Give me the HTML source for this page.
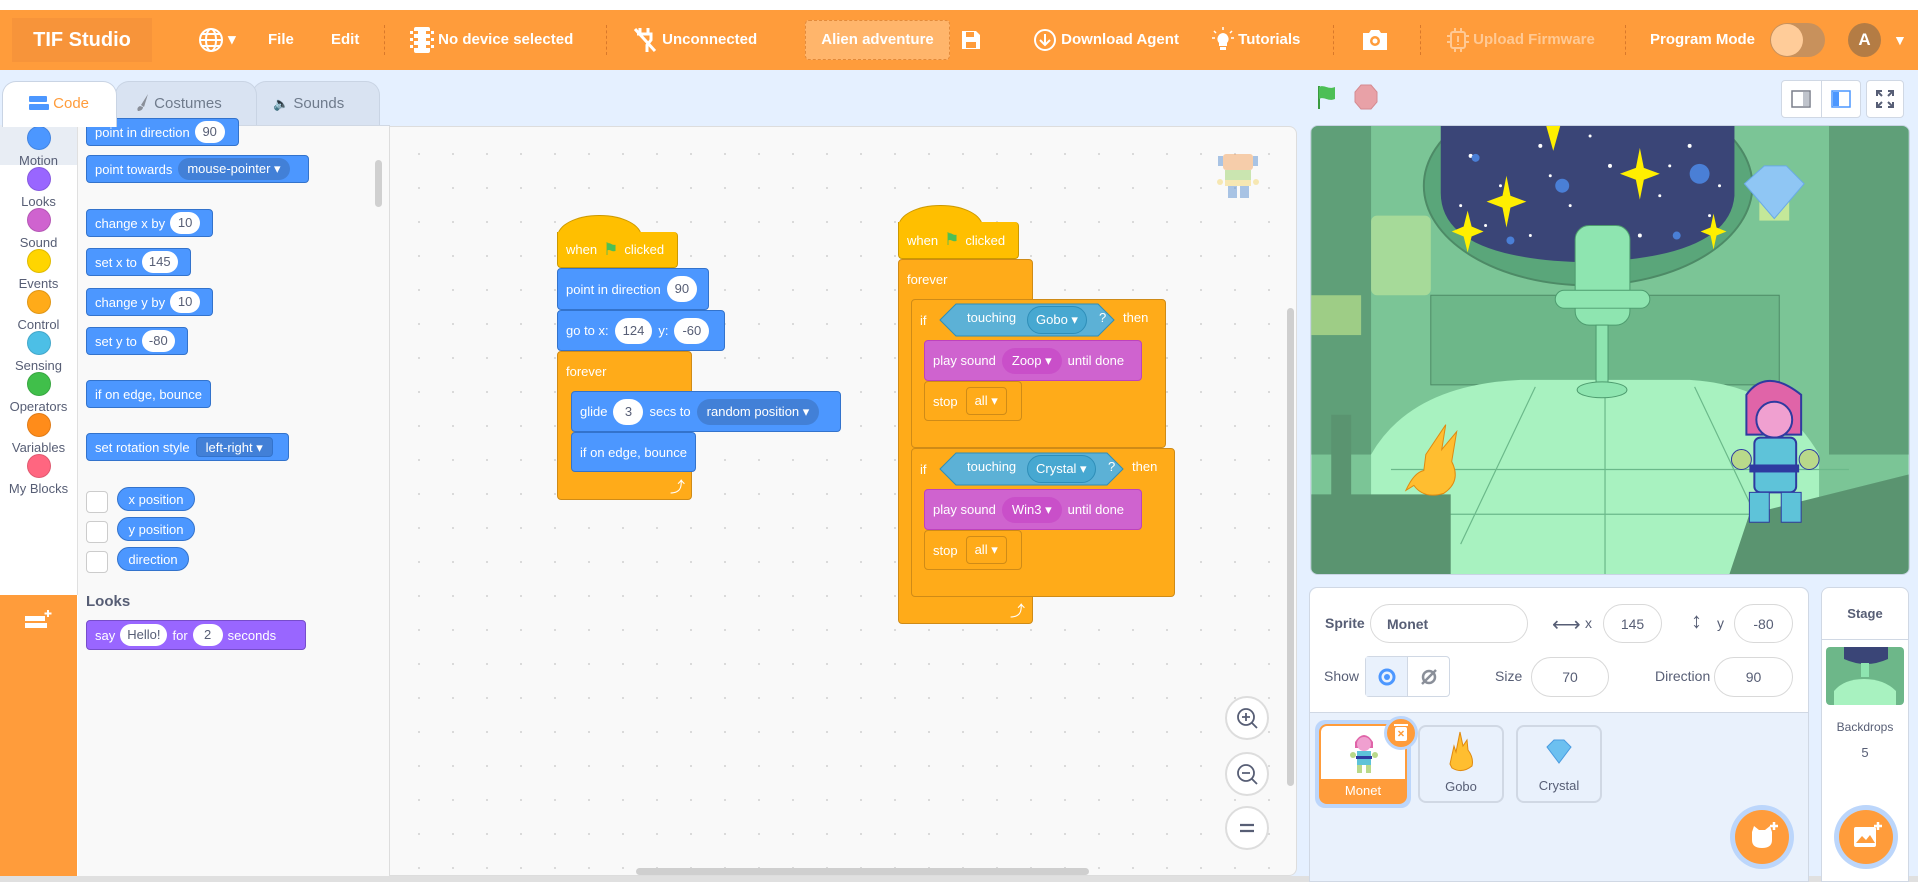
<!DOCTYPE html>
<html><head><meta charset="utf-8"><style>
*{box-sizing:border-box;margin:0;padding:0}
body{width:1918px;height:882px;overflow:hidden;background:#e5f0ff;font-family:"Liberation Sans",sans-serif;position:relative}
.a{position:absolute}
.hd{left:0;top:10px;width:1918px;height:60px;background:#ff9c3b;color:#fff;font-weight:bold;font-size:15px}
.hd .a{top:0;line-height:60px}
.sep{top:15px!important;height:30px;border-left:1px dashed #d9782a}
.tab{top:81px;height:44px;border:1px solid #c9d4e4;border-bottom:none;border-radius:14px 14px 0 0;background:#d9e3f2;color:#6f7b8c;font-size:15px;line-height:44px}
.cat{left:0;width:77px;text-align:center;font-size:13px;color:#575e75}
.cat i{display:block;width:24px;height:24px;border-radius:50%;margin:0 auto 3px;border:1px solid rgba(0,0,0,.12)}
.b{position:absolute;color:#fff;font-size:13px;display:flex;align-items:center;padding-left:8px;white-space:nowrap;border-radius:4px}
.m{background:#4c97ff;border:1px solid #3373cc}
.c{background:#ffab19;border:1px solid #cf8b17}
.e{background:#ffbf00;border:1px solid #cc9900}
.s{background:#cf63cf;border:1px solid #bd42bd}
.in{background:#fff;color:#575e75;border-radius:14px;padding:0 8px;margin:0 6px;height:26px;line-height:26px;min-width:30px;text-align:center}
.dd{border-radius:14px;padding:0 10px;margin:0 6px;height:26px;line-height:26px}
.pin{height:22px;line-height:22px;border-radius:11px;padding:0 7px;margin:0 5px}
.tx{color:#575e75}
.box{background:#fff;border:1px solid #d9d9d9;border-radius:20px;color:#575e75;font-size:14px;display:flex;align-items:center;justify-content:center}
</style></head><body>
<div class="a" style="left:0;top:0;width:1918px;height:10px;background:#fff"></div>
<div class="a hd">
 <div class="a" style="left:12px;top:8px!important;height:44px;width:140px;background:#f7943a;line-height:44px!important;text-align:center;font-size:20px">TIF Studio</div>
 <div class="a" style="left:198px"><svg width="26" height="26" viewBox="0 0 26 26" style="vertical-align:middle" fill="none" stroke="#fff" stroke-width="2"><circle cx="13" cy="13" r="11"/><ellipse cx="13" cy="13" rx="5" ry="11"/><path d="M2 13h22M4 7h18M4 19h18"/></svg> ▾</div>
 <div class="a" style="left:268px">File</div>
 <div class="a" style="left:331px">Edit</div>
 <div class="a sep" style="left:384px"></div>
 <div class="a" style="left:410px"><svg width="24" height="28" viewBox="0 0 24 28" style="vertical-align:middle"><rect x="4" y="1" width="16" height="26" rx="2" fill="#fff"/><g fill="#ff9c3b"><rect x="4" y="5" width="4" height="3"/><rect x="16" y="5" width="4" height="3"/><rect x="4" y="12" width="4" height="3"/><rect x="16" y="12" width="4" height="3"/><rect x="4" y="19" width="4" height="3"/><rect x="16" y="19" width="4" height="3"/></g><g fill="#fff"><rect x="0" y="5" width="3" height="3"/><rect x="21" y="5" width="3" height="3"/><rect x="0" y="12" width="3" height="3"/><rect x="21" y="12" width="3" height="3"/><rect x="0" y="19" width="3" height="3"/><rect x="21" y="19" width="3" height="3"/></g></svg> No device selected</div>
 <div class="a sep" style="left:606px"></div>
 <div class="a" style="left:632px"><svg width="26" height="28" viewBox="0 0 26 28" style="vertical-align:middle" fill="none" stroke="#fff" stroke-width="3"><path d="M8 2v6M16 2v6M5 8h14v6l-4 5v7M3 3l20 22"/></svg> Unconnected</div>
 <div class="a" style="left:805px;top:10px!important;height:40px;line-height:38px!important;width:145px;background:#ffb56b;border:1px dashed #e38a3a;border-radius:4px;text-align:center">Alien adventure</div>
 <div class="a" style="left:960px"><svg width="22" height="22" viewBox="0 0 22 22" style="vertical-align:middle"><path d="M2 2h14l4 4v14H2z" fill="#fff"/><rect x="6" y="3" width="8" height="5" fill="#ff9c3b"/><rect x="6" y="13" width="10" height="6" fill="#ff9c3b"/></svg></div>
 <div class="a" style="left:1033px"><svg width="24" height="24" viewBox="0 0 24 24" style="vertical-align:middle" fill="none" stroke="#fff" stroke-width="2"><circle cx="12" cy="12" r="10"/><path d="M12 6v11M7 12l5 5 5-5"/></svg> Download Agent</div>
 <div class="a" style="left:1212px"><svg width="22" height="26" viewBox="0 0 22 26" style="vertical-align:middle"><path d="M11 6a6 6 0 0 0-4 10v3h8v-3a6 6 0 0 0-4-10z" fill="#fff"/><rect x="8" y="20" width="6" height="3" fill="#fff"/><path d="M11 0v3M2 4l2 2M20 4l-2 2M0 11h3M19 11h3" stroke="#fff" stroke-width="1.5"/></svg> Tutorials</div>
 <div class="a sep" style="left:1333px"></div>
 <div class="a" style="left:1362px"><svg width="26" height="22" viewBox="0 0 26 22" style="vertical-align:middle"><path d="M1 4h6l2-3h8l2 3h6v17H1z" fill="#fff"/><circle cx="13" cy="12" r="5" fill="#ff9c3b"/><circle cx="13" cy="12" r="2.5" fill="#fff"/></svg></div>
 <div class="a sep" style="left:1420px"></div>
 <div class="a" style="left:1447px;color:#ffc994"><svg width="22" height="24" viewBox="0 0 22 24" style="vertical-align:middle" fill="none" stroke="#ffc994" stroke-width="2"><rect x="4" y="4" width="14" height="16" rx="2"/><path d="M11 8v6M11 16v1M0 8h4M0 14h4M18 8h4M18 14h4M8 0v4M14 0v4M8 20v4M14 20v4"/></svg> Upload Firmware</div>
 <div class="a sep" style="left:1625px"></div>
 <div class="a" style="left:1650px">Program Mode</div>
 <div class="a" style="left:1770px;top:13px!important;width:55px;height:34px;border-radius:17px;background:#c8915c"><div style="width:32px;height:32px;margin:1px;border-radius:50%;background:#ffcc99"></div></div>
 <div class="a" style="left:1848px;top:13px!important;width:33px;height:34px;border-radius:50%;background:#b47c44;text-align:center;line-height:34px!important;font-size:17px">A</div>
 <div class="a" style="left:1893px;color:#fff;font-size:14px">▼</div>
</div>

<div class="a tab" style="left:252px;width:128px;padding-left:20px"><span style="font-size:13px">🔈</span> Sounds</div>
<div class="a tab" style="left:115px;width:142px;padding-left:20px"><svg width="14" height="18" viewBox="0 0 14 18" style="vertical-align:-3px"><path d="M12 1L5 12l3 2z" fill="#8a8f99"/><path d="M4 13c-3 1-3 4-2 5 2 0 5-1 5-4z" fill="#8a8f99"/></svg> Costumes</div>
<div class="a tab" style="left:2px;width:115px;background:#fff;color:#ff9c3b;height:46px;padding-left:26px;z-index:2"><svg width="20" height="14" viewBox="0 0 20 14" style="vertical-align:-2px"><rect x="0" y="0" width="18" height="6" rx="1" fill="#4c97ff"/><rect x="0" y="8" width="20" height="6" rx="1" fill="#4c97ff"/></svg> Code</div>

<div class="a" style="left:0;top:125px;width:390px;height:757px;background:#fff;border-top:1px solid #d0d8e4"></div>
<div class="a" style="left:0;top:125px;width:78px;height:470px;background:#fff;border-right:1px solid #e0e0e0"></div>
<div class="a" style="left:0;top:125px;width:77px;height:40px;background:#e8edf4"></div>
<div class="a cat" style="top:126px"><i style="background:#4c97ff"></i>Motion</div>
<div class="a cat" style="top:167px"><i style="background:#9966ff"></i>Looks</div>
<div class="a cat" style="top:208px"><i style="background:#cf63cf"></i>Sound</div>
<div class="a cat" style="top:249px"><i style="background:#ffd500"></i>Events</div>
<div class="a cat" style="top:290px"><i style="background:#ffab19"></i>Control</div>
<div class="a cat" style="top:331px"><i style="background:#4cbfe6"></i>Sensing</div>
<div class="a cat" style="top:372px"><i style="background:#40bf4a"></i>Operators</div>
<div class="a cat" style="top:413px"><i style="background:#ff8c1a"></i>Variables</div>
<div class="a cat" style="top:454px"><i style="background:#ff6680"></i>My Blocks</div>
<div class="a" style="left:0;top:595px;width:77px;height:287px;background:#ff9c3b"></div>
<svg class="a" style="left:25px;top:608px" width="28" height="24" viewBox="0 0 28 24"><rect x="0" y="8" width="20" height="5" fill="#fff"/><rect x="0" y="15" width="22" height="5" fill="#fff"/><path d="M23 2v7M19.5 5.5h7" stroke="#fff" stroke-width="2"/></svg>

<div class="a" style="left:78px;top:126px;width:312px;height:756px;background:#f9f9f9;border-right:1px solid #ddd"></div>
<div class="a" style="left:375px;top:160px;width:7px;height:47px;background:#d0d0d0;border-radius:4px"></div>
<div class="b m" style="left:86px;top:118px;width:153px;height:28px">point in direction<span class="in pin">90</span></div>
<div class="b m" style="left:86px;top:155px;width:223px;height:28px">point towards<span class="pin" style="background:#4280d7;margin-left:6px;padding:0 9px">mouse-pointer ▾</span></div>
<div class="b m" style="left:86px;top:209px;width:127px;height:28px">change x by<span class="in pin">10</span></div>
<div class="b m" style="left:86px;top:248px;width:105px;height:28px">set x to<span class="in pin">145</span></div>
<div class="b m" style="left:86px;top:288px;width:127px;height:28px">change y by<span class="in pin">10</span></div>
<div class="b m" style="left:86px;top:327px;width:102px;height:28px">set y to<span class="in pin">-80</span></div>
<div class="b m" style="left:86px;top:380px;width:125px;height:28px">if on edge, bounce</div>
<div class="b m" style="left:86px;top:433px;width:203px;height:28px">set rotation style<span style="background:#4280d7;border:1px solid #3373cc;border-radius:4px;margin-left:6px;padding:0 9px;height:20px;line-height:20px">left-right ▾</span></div>
<div class="a" style="left:86px;top:491px;width:22px;height:22px;border:1px solid #ccc;border-radius:4px;background:#fff"></div>
<div class="a" style="left:86px;top:521px;width:22px;height:22px;border:1px solid #ccc;border-radius:4px;background:#fff"></div>
<div class="a" style="left:86px;top:551px;width:22px;height:22px;border:1px solid #ccc;border-radius:4px;background:#fff"></div>
<div class="b m" style="left:117px;top:487px;width:78px;height:24px;border-radius:12px;justify-content:center;padding:0">x position</div>
<div class="b m" style="left:117px;top:517px;width:78px;height:24px;border-radius:12px;justify-content:center;padding:0">y position</div>
<div class="b m" style="left:117px;top:547px;width:72px;height:24px;border-radius:12px;justify-content:center;padding:0">direction</div>
<div class="a" style="left:86px;top:593px;font-size:15px;font-weight:bold;color:#575e75">Looks</div>
<div class="b" style="left:86px;top:620px;width:220px;height:30px;background:#9966ff;border:1px solid #774dcb">say<span class="in pin">Hello!</span>for<span class="in pin">2</span>seconds</div>
<div class="a" style="left:0;top:876px;width:1918px;height:6px;background:#e0e0e0"></div>

<div class="a" style="left:390px;top:126px;width:907px;height:750px;background-color:#f9f9f9;background-image:radial-gradient(#d8d8d8 1px,transparent 1.2px);background-size:34px 34px;background-position:12px 10px;border:1px solid #ddd;border-left:none;border-radius:0 8px 8px 0"></div>
<div class="a" style="left:1287px;top:308px;width:7px;height:478px;background:#cfcfcf;border-radius:4px"></div>
<div class="a" style="left:636px;top:868px;width:453px;height:7px;background:#cfcfcf;border-radius:4px"></div>
<svg class="a" style="left:1215px;top:148px" width="46" height="56" viewBox="0 0 46 56" opacity=".5"><rect x="8" y="6" width="30" height="16" rx="3" fill="#f5a25d"/><rect x="3" y="8" width="5" height="10" fill="#5a8fd0"/><rect x="38" y="8" width="5" height="10" fill="#5a8fd0"/><rect x="10" y="22" width="26" height="14" fill="#9cd36a"/><rect x="10" y="32" width="26" height="6" fill="#f5d76e"/><rect x="13" y="38" width="9" height="12" fill="#5a8fd0"/><rect x="25" y="38" width="9" height="12" fill="#5a8fd0"/><circle cx="5" cy="34" r="3" fill="#f5d76e"/><circle cx="41" cy="34" r="3" fill="#f5d76e"/></svg>
<div class="a" style="left:1225px;top:696px;width:44px;height:44px;border-radius:50%;background:#fff;border:2px solid #ddd"><svg width="40" height="40" viewBox="0 0 40 40"><circle cx="19" cy="19" r="8" fill="none" stroke="#575e75" stroke-width="1.8"/><path d="M25 25l5 5M15 19h8M19 15v8" stroke="#575e75" stroke-width="1.8"/></svg></div>
<div class="a" style="left:1225px;top:752px;width:44px;height:44px;border-radius:50%;background:#fff;border:2px solid #ddd"><svg width="40" height="40" viewBox="0 0 40 40"><circle cx="19" cy="19" r="8" fill="none" stroke="#575e75" stroke-width="1.8"/><path d="M25 25l5 5M15 19h8" stroke="#575e75" stroke-width="1.8"/></svg></div>
<div class="a" style="left:1225px;top:806px;width:44px;height:44px;border-radius:50%;background:#fff;border:2px solid #ddd"><svg width="40" height="40" viewBox="0 0 40 40"><path d="M13 17h14M13 23h14" stroke="#575e75" stroke-width="2.2"/></svg></div>

<div class="a" style="left:557px;top:215px;width:85px;height:40px;border-radius:42px 42px 0 0/22px 22px 0 0;background:#ffbf00;border:1px solid #cc9900;border-bottom:none"></div>
<div class="b e" style="left:557px;top:232px;width:121px;height:36px;border-top:none;border-radius:0 4px 4px 4px">when <span style="color:#4cbf56;font-size:17px;margin:0 6px">⚑</span> clicked</div>
<div class="a" style="left:557px;top:351px;width:135px;height:149px;background:#ffab19;border:1px solid #cf8b17;border-radius:4px"></div>
<div class="b m" style="left:557px;top:268px;width:152px;height:42px">point in direction<span class="in">90</span></div>
<div class="b m" style="left:557px;top:310px;width:168px;height:41px">go to x:<span class="in">124</span>y:<span class="in">-60</span></div>
<div class="b" style="left:558px;top:352px;width:130px;height:38px;color:#fff">forever</div>
<div class="b m" style="left:571px;top:391px;width:270px;height:41px">glide<span class="in">3</span>secs to<span class="dd" style="background:#4280d7">random position ▾</span></div>
<div class="b m" style="left:571px;top:432px;width:125px;height:40px">if on edge, bounce</div>
<div class="a" style="left:670px;top:476px;color:#fff;font-size:15px">⤴</div>

<div class="a" style="left:898px;top:205px;width:85px;height:36px;border-radius:42px 42px 0 0/22px 22px 0 0;background:#ffbf00;border:1px solid #cc9900;border-bottom:none"></div>
<div class="b e" style="left:898px;top:222px;width:121px;height:37px;border-top:none;border-radius:0 4px 4px 4px">when <span style="color:#4cbf56;font-size:17px;margin:0 6px">⚑</span> clicked</div>
<div class="a" style="left:898px;top:259px;width:135px;height:365px;background:#ffab19;border:1px solid #cf8b17;border-radius:4px"></div>
<div class="b" style="left:899px;top:260px;width:130px;height:38px">forever</div>
<div class="a" style="left:911px;top:299px;width:255px;height:149px;background:#ffab19;border:1px solid #cf8b17;border-radius:4px"></div>
<div class="b" style="left:912px;top:300px;width:250px;height:40px">if<svg style="margin-left:12px" width="176" height="36" viewBox="0 0 176 36"><path d="M1 18L17 2h142l16 16-16 16H17z" fill="#5cb1d6" stroke="#2e8eb8"/></svg><span class="a" style="left:55px;top:10px">touching</span><span class="a" style="left:115px;top:6px;background:#47a8d1;border:1px solid #2e8eb8;border-radius:14px;height:28px;line-height:26px;padding:0 8px">Gobo ▾</span><span class="a" style="left:187px;top:10px">?</span><span class="a" style="left:211px;top:10px">then</span></div>
<div class="b s" style="left:924px;top:340px;width:218px;height:41px">play sound<span class="dd" style="background:#c94fc9">Zoop ▾</span>until done</div>
<div class="b c" style="left:924px;top:381px;width:98px;height:40px">stop<span style="border:1px solid #cf8b17;border-radius:4px;margin-left:8px;padding:0 8px;height:28px;line-height:26px">all ▾</span></div>
<div class="a" style="left:911px;top:448px;width:264px;height:149px;background:#ffab19;border:1px solid #cf8b17;border-radius:4px"></div>
<div class="b" style="left:912px;top:449px;width:260px;height:40px">if<svg style="margin-left:12px" width="185" height="36" viewBox="0 0 185 36"><path d="M1 18L17 2h151l16 16-16 16H17z" fill="#5cb1d6" stroke="#2e8eb8"/></svg><span class="a" style="left:55px;top:10px">touching</span><span class="a" style="left:115px;top:6px;background:#47a8d1;border:1px solid #2e8eb8;border-radius:14px;height:28px;line-height:26px;padding:0 8px">Crystal ▾</span><span class="a" style="left:196px;top:10px">?</span><span class="a" style="left:220px;top:10px">then</span></div>
<div class="b s" style="left:924px;top:489px;width:218px;height:41px">play sound<span class="dd" style="background:#c94fc9">Win3 ▾</span>until done</div>
<div class="b c" style="left:924px;top:530px;width:98px;height:40px">stop<span style="border:1px solid #cf8b17;border-radius:4px;margin-left:8px;padding:0 8px;height:28px;line-height:26px">all ▾</span></div>
<div class="a" style="left:1010px;top:600px;color:#fff;font-size:15px">⤴</div>

<svg class="a" style="left:1316px;top:84px" width="22" height="26" viewBox="0 0 22 26"><path d="M3 2v23" stroke="#3a9a3f" stroke-width="2"/><path d="M3 3c5-3 9 3 16 0v12c-7 3-11-3-16 0z" fill="#4cbf56"/></svg>
<svg class="a" style="left:1354px;top:84px" width="24" height="26" viewBox="0 0 24 26"><path d="M7 1h10l6 7v10l-6 7H7l-6-7V8z" fill="#e8a1a7" stroke="#d58a90"/></svg>
<div class="a" style="left:1781px;top:80px;width:80px;height:38px;background:#fff;border:1px solid #d0d8e4;border-radius:4px"></div>
<div class="a" style="left:1821px;top:80px;width:1px;height:38px;background:#d0d8e4"></div>
<svg class="a" style="left:1791px;top:90px" width="20" height="18"><rect x="1" y="1" width="18" height="16" fill="none" stroke="#7a7f8a" stroke-width="1.5"/><rect x="12" y="2" width="6" height="14" fill="#c0c4cc"/></svg>
<svg class="a" style="left:1831px;top:90px" width="20" height="18"><rect x="1" y="1" width="18" height="16" fill="none" stroke="#4c97ff" stroke-width="1.5"/><rect x="2" y="2" width="6" height="14" fill="#4c97ff"/></svg>
<div class="a" style="left:1866px;top:80px;width:38px;height:38px;background:#fff;border:1px solid #d0d8e4;border-radius:4px"></div>
<svg class="a" style="left:1875px;top:89px" width="20" height="20" fill="none" stroke="#575e75" stroke-width="2"><path d="M2 7V2h5M2 2l5 5M18 7V2h-5M18 2l-5 5M2 13v5h5M2 18l5-5M18 13v5h-5M18 18l-5-5"/></svg>

<svg class="a" style="left:1310px;top:125px;border:1px solid #c9d4e4;border-radius:8px" width="600" height="450" viewBox="0 0 600 450">
<rect width="600" height="450" fill="#7bc596"/>
<rect x="0" y="0" width="60" height="330" fill="#5f9f78"/>
<rect x="520" y="0" width="80" height="330" fill="#5f9f78"/>
<rect x="60" y="90" width="60" height="80" rx="6" fill="#b9e39a" opacity=".7"/>
<rect x="450" y="60" width="30" height="35" fill="#d7f09a" opacity=".8"/>
<rect x="0" y="170" width="50" height="40" fill="#c8ec90" opacity=".6"/>
<rect x="120" y="170" width="350" height="90" fill="#6db789" stroke="#4d8a66"/>
<ellipse cx="278" cy="60" rx="165" ry="100" fill="#5aa67a" stroke="#4d8a66" stroke-width="2"/>
<path d="M130 0h295v70q-5 62-147 67q-148-3-148-70z" fill="#3a4577"/>
<g fill="#fff"><circle cx="160" cy="30" r="2"/><circle cx="190" cy="60" r="1.5"/><circle cx="230" cy="20" r="2"/><circle cx="260" cy="80" r="1.5"/><circle cx="300" cy="40" r="2"/><circle cx="350" cy="70" r="1.5"/><circle cx="380" cy="20" r="2"/><circle cx="400" cy="90" r="1.5"/><circle cx="220" cy="110" r="1.5"/><circle cx="330" cy="110" r="2"/><circle cx="150" cy="80" r="1.5"/><circle cx="280" cy="10" r="1.5"/><circle cx="175" cy="100" r="1.5"/><circle cx="360" cy="40" r="1.5"/><circle cx="410" cy="60" r="1.5"/><circle cx="240" cy="50" r="1.5"/></g>
<g fill="#4a7fd6"><circle cx="390" cy="48" r="10"/><circle cx="252" cy="60" r="7"/><circle cx="165" cy="32" r="4"/><circle cx="200" cy="115" r="4"/><circle cx="367" cy="110" r="4"/></g>
<g fill="#ffef00"><path d="M196 50l4 20 16 6-16 6-4 20-4-20-16-6 16-6z"/><path d="M330 22l4 20 16 6-16 6-4 20-4-20-16-6 16-6z"/><path d="M157 85l4 16 12 5-12 5-4 16-4-16-12-5 12-5z"/><path d="M404 88l3 14 10 4-10 4-3 14-3-14-10-4 10-4z"/><path d="M236 0h14l-7 25z"/></g>
<path d="M60 330q40-70 150-75h170q90 5 130 75v120H60z" fill="#a8f2c0"/>
<path d="M150 420L225 262M385 262L460 420M295 262v188M80 345h460M130 390h400" stroke="#6bb98a" stroke-width="1.2"/>
<rect x="265" y="100" width="55" height="100" rx="14" fill="#8ee5b0" stroke="#4d9b6e"/>
<rect x="245" y="165" width="95" height="18" rx="9" fill="#8ee5b0" stroke="#4d9b6e"/>
<rect x="286" y="200" width="12" height="65" fill="#8ee5b0" stroke="#4d9b6e"/>
<ellipse cx="292" cy="265" rx="25" ry="8" fill="#8ee5b0" stroke="#4d9b6e"/>
<path d="M0 370h140v80H0z" fill="#5a9470"/>
<rect x="20" y="290" width="20" height="90" fill="#5a9470"/>
<path d="M440 390l160-40v100H420z" fill="#5a9470"/>
<path d="M435 58l20-18h22l18 18-30 35z" fill="#8fc6f4" stroke="#6aaae6"/>
<path d="M115 330l20-30-4 25 15-18-5 30q10 20-8 32-20 6-30-8l-8 5q8-18 18-20z" fill="#ffbe30" stroke="#e08a10"/>
<path d="M437 270q20-28 55 0v40h-55z" fill="#e064a8" stroke="#2e3aa0" stroke-width="2"/>
<circle cx="465" cy="295" r="18" fill="#f0a0d0" stroke="#2e3aa0" stroke-width="2"/>
<rect x="445" y="313" width="42" height="55" rx="6" fill="#5ec3d9" stroke="#2e3aa0" stroke-width="2"/>
<rect x="440" y="340" width="50" height="8" fill="#2e3aa0"/>
<rect x="440" y="368" width="20" height="30" fill="#5ec3d9" stroke="#2e3aa0"/><rect x="472" y="368" width="20" height="30" fill="#5ec3d9" stroke="#2e3aa0"/>
<circle cx="432" cy="335" r="10" fill="#b9d98a" stroke="#2e3aa0"/><circle cx="500" cy="335" r="10" fill="#b9d98a" stroke="#2e3aa0"/>
</svg>

<div class="a" style="left:1309px;top:587px;width:500px;height:295px;background:#e9f1fc;border:1px solid #d0d8e4;border-radius:8px 8px 0 0"></div>
<div class="a" style="left:1310px;top:588px;width:498px;height:125px;background:#fff;border-radius:8px 8px 0 0;border-bottom:1px solid #d0d8e4"></div>
<div class="a tx" style="left:1325px;top:615px;font-size:14px;font-weight:bold">Sprite</div>
<div class="a box" style="left:1370px;top:604px;width:158px;height:39px;justify-content:flex-start;padding-left:16px;font-weight:bold">Monet</div>
<div class="a tx" style="left:1552px;top:612px;font-size:20px">⟷</div>
<div class="a tx" style="left:1585px;top:615px;font-size:14px">x</div>
<div class="a box" style="left:1603px;top:604px;width:59px;height:39px">145</div>
<div class="a tx" style="left:1691px;top:608px;font-size:22px">↕</div>
<div class="a tx" style="left:1717px;top:615px;font-size:14px">y</div>
<div class="a box" style="left:1734px;top:604px;width:59px;height:39px">-80</div>
<div class="a tx" style="left:1324px;top:668px;font-size:14px">Show</div>
<div class="a" style="left:1365px;top:656px;width:85px;height:41px;border:1px solid #d0d8e4;border-radius:4px;background:#fff;display:flex"><div style="width:42px;border-right:1px solid #d0d8e4;background:#e9f1fc;display:flex;align-items:center;justify-content:center"><svg width="20" height="20"><circle cx="10" cy="10" r="7" fill="none" stroke="#4c97ff" stroke-width="3"/><circle cx="10" cy="10" r="3" fill="#4c97ff"/></svg></div><div style="flex:1;display:flex;align-items:center;justify-content:center"><svg width="20" height="20" fill="none" stroke="#8a8f99" stroke-width="2.5"><circle cx="10" cy="10" r="6"/><path d="M3 17L17 3"/></svg></div></div>
<div class="a tx" style="left:1495px;top:668px;font-size:14px">Size</div>
<div class="a box" style="left:1531px;top:657px;width:78px;height:40px">70</div>
<div class="a tx" style="left:1655px;top:668px;font-size:14px">Direction</div>
<div class="a box" style="left:1714px;top:657px;width:79px;height:40px">90</div>
<div class="a" style="left:1315px;top:720px;width:96px;height:88px;border-radius:10px;background:#bcd6fb"></div>
<div class="a" style="left:1319px;top:724px;width:88px;height:80px;border-radius:8px;background:#ff9c3b;overflow:hidden"><div style="height:53px;background:#fff;margin:2px 2px 0;border-radius:6px 6px 0 0;position:relative"><svg class="a" style="left:28px;top:4px" width="30" height="44" viewBox="0 0 30 44"><path d="M6 12q9-14 18 0v6H6z" fill="#e064a8"/><circle cx="15" cy="14" r="7" fill="#f0a0d0"/><rect x="8" y="21" width="14" height="14" fill="#5ec3d9"/><rect x="7" y="26" width="16" height="3" fill="#2e3aa0"/><rect x="8" y="35" width="5" height="8" fill="#b9d98a"/><rect x="17" y="35" width="5" height="8" fill="#b9d98a"/><circle cx="4" cy="25" r="3" fill="#b9d98a"/><circle cx="26" cy="25" r="3" fill="#b9d98a"/></svg></div><div style="color:#fff;text-align:center;font-size:13px;margin-top:4px">Monet</div></div>
<div class="a" style="left:1384px;top:716px;width:34px;height:34px;border-radius:50%;background:#ff9c3b;border:3px solid #bcd6fb"><svg width="28" height="28" viewBox="0 0 28 28"><rect x="8" y="8" width="12" height="14" rx="2" fill="#fff"/><rect x="7" y="5" width="14" height="2" fill="#fff"/><path d="M11.5 12l5 5M16.5 12l-5 5" stroke="#ff9c3b" stroke-width="1.5"/></svg></div>
<div class="a" style="left:1418px;top:725px;width:86px;height:78px;border:2px solid #d0d8e4;border-radius:8px;background:#e9f1fc;text-align:center;font-size:13px;color:#575e75"><svg style="margin-top:3px" width="34" height="44" viewBox="0 0 34 44"><path d="M6 34l4-18 2 6 4-20 3 14 4-6 1 10q6 8 4 16-10 8-20 2z" fill="#ffbe30" stroke="#e08a10"/></svg><div style="margin-top:2px">Gobo</div></div>
<div class="a" style="left:1516px;top:725px;width:86px;height:78px;border:2px solid #d0d8e4;border-radius:8px;background:#e9f1fc;text-align:center;font-size:13px;color:#575e75"><svg style="margin-top:10px" width="32" height="32" viewBox="0 0 32 32"><path d="M4 10l7-7h10l7 7-12 16z" fill="#6cc0f0" stroke="#4a9be0"/></svg><div style="margin-top:6px">Crystal</div></div>
<div class="a" style="left:1730px;top:805px;width:64px;height:64px;border-radius:50%;background:#bcd6fb"></div>
<div class="a" style="left:1735px;top:810px;width:54px;height:54px;border-radius:50%;background:#ff9c3b"><svg width="54" height="54" viewBox="0 0 54 54"><path d="M17 22l2-6 5 4h6l5-4 2 6v8q0 8-10 8t-10-8z" fill="#fff"/><path d="M39 12v8M35 16h8" stroke="#fff" stroke-width="2.5"/></svg></div>

<div class="a" style="left:1821px;top:587px;width:88px;height:295px;background:#fff;border:1px solid #d0d8e4;border-radius:8px 8px 0 0"></div>
<div class="a" style="left:1821px;top:639px;width:88px;height:1px;background:#d0d8e4"></div>
<div class="a tx" style="left:1821px;top:606px;width:88px;text-align:center;font-size:13px;font-weight:bold">Stage</div>
<svg class="a" style="left:1826px;top:647px;border-radius:4px" width="78" height="58" viewBox="0 0 78 58"><rect width="78" height="58" fill="#6db789"/><path d="M18 0h44v12q-22 10-44 0z" fill="#3a4577"/><path d="M8 44q10-12 30-12t32 12v14H8z" fill="#a8f2c0"/><rect x="35" y="16" width="8" height="14" fill="#8ee5b0"/></svg>
<div class="a tx" style="left:1821px;top:720px;width:88px;text-align:center;font-size:12px">Backdrops</div>
<div class="a tx" style="left:1821px;top:745px;width:88px;text-align:center;font-size:13px">5</div>
<div class="a" style="left:1834px;top:805px;width:64px;height:64px;border-radius:50%;background:#bcd6fb"></div>
<div class="a" style="left:1839px;top:810px;width:54px;height:54px;border-radius:50%;background:#ff9c3b"><svg width="54" height="54" viewBox="0 0 54 54"><rect x="15" y="17" width="22" height="20" rx="2" fill="#fff"/><path d="M17 33l6-7 4 4 4-5 5 8z" fill="#ff9c3b"/><path d="M39 12v8M35 16h8" stroke="#fff" stroke-width="2.5"/></svg></div>
</body></html>
